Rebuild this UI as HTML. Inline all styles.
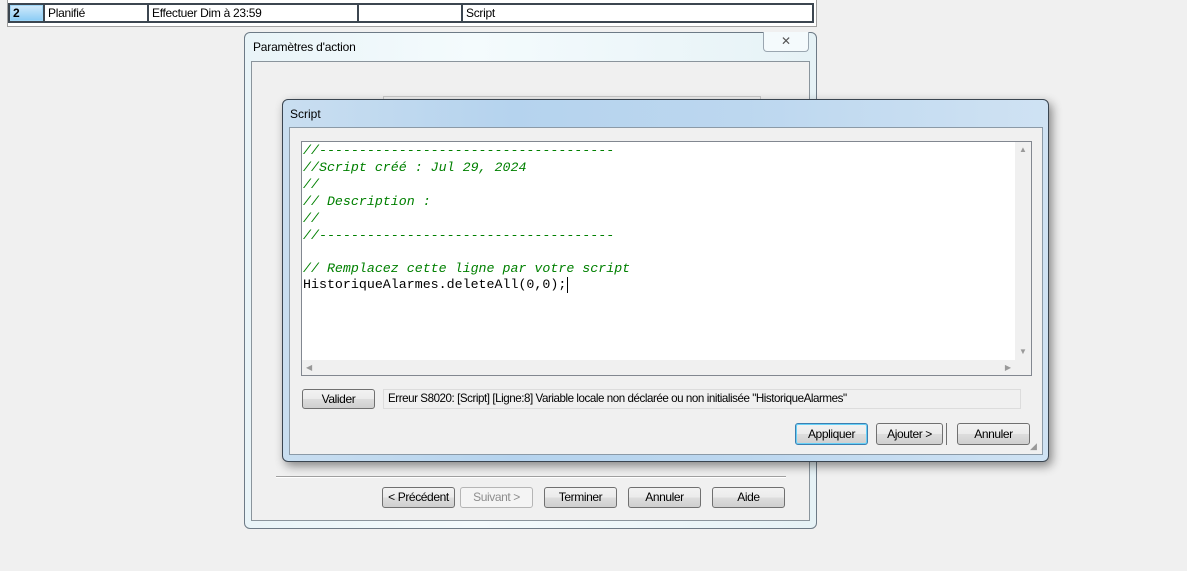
<!DOCTYPE html>
<html><head><meta charset="utf-8">
<style>
*{margin:0;padding:0;box-sizing:border-box}
body{width:1187px;height:571px;background:#f0f0f0;position:relative;overflow:hidden;font-family:"Liberation Sans",sans-serif;font-size:12px;color:#000}
.abs{position:absolute}
.cell{position:absolute;top:5px;height:16px;background:#fff;border:1px solid #fff;padding-left:2px;line-height:14px;font-size:12px;letter-spacing:-0.3px}
.btn{position:absolute;height:21px;border:1px solid #707070;border-radius:3px;background:linear-gradient(#f2f2f2 0%,#ebebeb 50%,#dddddd 51%,#cfcfcf 100%);text-align:center;line-height:19px;font-size:12px;letter-spacing:-0.4px}
.code{position:absolute;left:303px;font-family:"Liberation Mono",monospace;font-size:13.3px;line-height:17px;white-space:pre;color:#008000;font-style:italic}
</style></head><body>
<div class="abs" style="left:7px;top:0;width:810px;height:27px;background:#fff;border:1px solid #a0a0a0;border-top:none"></div>
<div class="abs" style="left:8px;top:3px;width:806px;height:20px;background:#3c4650"></div>
<div class="cell" style="left:10px;width:33px;background:linear-gradient(#cfe9fb,#8ecdf5);border-color:#9fd6f7;font-weight:bold">2</div>
<div class="cell" style="left:45px;width:102px">Planifié</div>
<div class="cell" style="left:149px;width:208px">Effectuer Dim à 23:59</div>
<div class="cell" style="left:359px;width:102px"></div>
<div class="cell" style="left:463px;width:349px">Script</div>

<div class="abs" style="left:244px;top:32px;width:573px;height:497px;border:1px solid #6d7a86;border-radius:6px;background:linear-gradient(90deg,#e9f4f8,#f4fbfd 40%,#e6f2f6)"></div>
<div class="abs" style="left:253px;top:40px;font-size:12px;letter-spacing:-0.2px">Paramètres d'action</div>
<div class="abs" style="left:763px;top:32px;width:46px;height:20px;border:1px solid #9aa6b0;border-top:none;border-radius:0 0 4px 4px;background:#f4fafc;text-align:center;line-height:18px;color:#555;font-size:12px">✕</div>
<div class="abs" style="left:251px;top:61px;width:559px;height:460px;background:#f0f0f0;border:1px solid #8a949c"></div>
<div class="abs" style="left:383px;top:96px;width:378px;height:4px;border:1px solid #c8c8c8;border-bottom:none"></div>
<div class="abs" style="left:276px;top:476px;width:510px;height:2px;border-top:1px solid #a0a0a0;border-bottom:1px solid #fff"></div>
<div class="btn" style="left:382px;top:487px;width:73px">&lt; Précédent</div>
<div class="btn" style="left:460px;top:487px;width:73px;color:#8d8d8d;border-color:#b5b5b5;background:#f4f4f4">Suivant &gt;</div>
<div class="btn" style="left:544px;top:487px;width:73px">Terminer</div>
<div class="btn" style="left:628px;top:487px;width:73px">Annuler</div>
<div class="btn" style="left:712px;top:487px;width:73px">Aide</div>

<div class="abs" style="left:282px;top:99px;width:767px;height:363px;border:1px solid #3a4550;border-radius:6px;background:linear-gradient(90deg,#c9def0,#b5d3ee 30%,#bcd7ef 60%,#cfe2f3);box-shadow:3px 4px 10px rgba(0,0,0,.45)"></div>
<div class="abs" style="left:290px;top:107px;font-size:12px">Script</div>
<div class="abs" style="left:289px;top:127px;width:754px;height:328px;background:#f0f0f0;border:1px solid #8b9aa7"></div>
<div class="abs" style="left:301px;top:141px;width:731px;height:235px;background:#fff;border:1px solid #828790"></div>
<div class="abs" style="left:1015px;top:142px;width:16px;height:218px;background:#f0f0f0;color:#999;font-size:8px;text-align:center;line-height:16px">▲<div style="position:absolute;bottom:0;width:16px">▼</div></div>
<div class="abs" style="left:302px;top:360px;width:713px;height:15px;background:#f0f0f0;color:#999;font-size:8px;line-height:15px;padding-left:4px">◀<span style="position:absolute;right:4px">▶</span></div>
<div class="abs" style="left:1015px;top:360px;width:16px;height:15px;background:#f0f0f0"></div>
<div class="code" style="top:142px">//-------------------------------------</div>
<div class="code" style="top:159px">//Script créé : Jul 29, 2024</div>
<div class="code" style="top:176px">//</div>
<div class="code" style="top:193px">// Description :</div>
<div class="code" style="top:210px">//</div>
<div class="code" style="top:227px">//-------------------------------------</div>
<div class="code" style="top:260px">// Remplacez cette ligne par votre script</div>
<div class="code" style="top:276px;color:#000;font-style:normal">HistoriqueAlarmes.deleteAll(0,0);</div>
<div class="abs" style="left:567px;top:277px;width:1px;height:16px;background:#000"></div>

<div class="btn" style="left:302px;top:389px;width:73px;height:20px;line-height:18px">Valider</div>
<div class="abs" style="left:383px;top:389px;width:638px;height:20px;border:1px solid #dcdcdc;background:#f0f0f0;padding-left:4px;line-height:18px;font-size:11.6px;letter-spacing:-0.45px">Erreur S8020: [Script] [Ligne:8] Variable locale non déclarée ou non initialisée "HistoriqueAlarmes"</div>

<div class="btn" style="left:795px;top:423px;width:73px;height:22px;border-color:#3c7fb1;box-shadow:inset 0 0 0 1px #67d0f7;line-height:20px">Appliquer</div>
<div class="btn" style="left:876px;top:423px;width:67px;height:22px;line-height:20px">Ajouter &gt;</div>
<div class="abs" style="left:946px;top:423px;width:2px;height:22px;border-left:1px solid #707070"></div>
<div class="btn" style="left:957px;top:423px;width:73px;height:22px;line-height:20px">Annuler</div>
<div class="abs" style="left:1030px;top:441px;color:#999;font-size:9px">◢</div>
</body></html>
